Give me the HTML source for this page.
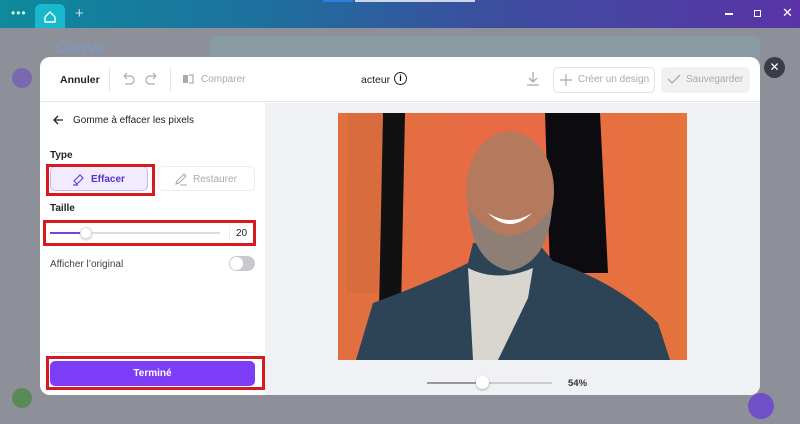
<!DOCTYPE html>
<html><head><meta charset="utf-8"><style>
*{box-sizing:border-box;margin:0;padding:0}
body{width:800px;height:424px;overflow:hidden;position:relative;font-family:"Liberation Sans",sans-serif;background:#888b95}
.top{position:absolute;left:0;top:0;width:800px;height:28px;background:linear-gradient(90deg,#0e8a9c 0%,#1f6e9e 35%,#3b4f9f 60%,#5a34a6 100%)}
.tab{position:absolute;left:35px;top:4px;width:30px;height:24px;background:#18b9cc;border-radius:6px 6px 0 0}
.bg{position:absolute;left:0;top:28px;width:800px;height:396px;background:#8e9099}
.modal{position:absolute;left:40px;top:57px;width:720px;height:338px;background:#fff;border-radius:10px;overflow:hidden}
.hdr{position:absolute;left:0;top:0;width:720px;height:45px;border-bottom:1px solid #e6e7ea;font-size:10px}
.side{position:absolute;left:0;top:46px;width:225px;height:292px;background:#fff}
.main{position:absolute;left:225px;top:46px;width:495px;height:292px;background:#f0f1f4}
.t{position:absolute;white-space:nowrap}
.red{position:absolute;border:3px solid #d71920}
</style></head><body>
<div class="top">
 <div class="t" style="left:11px;top:6px;color:#cfe;font-size:12px;letter-spacing:1px">•••</div>
 <div class="tab"><svg width="30" height="24"><path d="M10 13 L15 8 L20 13 V18 H10Z" fill="none" stroke="#fff" stroke-width="1.4"/></svg></div>
 <div class="t" style="left:75px;top:5px;color:#cde;font-size:15px">+</div>
 <div style="position:absolute;left:323px;top:0;width:30px;height:2px;background:#2c7fe0"></div>
 <div style="position:absolute;left:355px;top:0;width:120px;height:2px;background:#cfd6ea"></div>
 <div style="position:absolute;left:725px;top:13px;width:8px;height:1.5px;background:#fff"></div>
 <div style="position:absolute;left:754px;top:10px;width:7px;height:7px;border:1.5px solid #fff"></div>
 <div class="t" style="left:782px;top:5px;color:#fff;font-size:13px">✕</div>
</div>
<div class="bg">
 <div style="position:absolute;left:55px;top:10px;color:#7f97bd;font-size:17px;font-weight:bold;font-style:italic">Canva</div>
 <div style="position:absolute;left:210px;top:8px;width:550px;height:30px;background:#889aa2;border-radius:6px"></div>
 <div style="position:absolute;left:12px;top:40px;width:20px;height:20px;border-radius:50%;background:#7b68b0"></div>
 <div style="position:absolute;left:12px;top:360px;width:20px;height:20px;border-radius:50%;background:#5a8a58"></div>
 <div style="position:absolute;left:748px;top:365px;width:26px;height:26px;border-radius:50%;background:#6f50c8"></div>
</div>
<div style="position:absolute;left:764px;top:57px;width:21px;height:21px;border-radius:50%;background:#3a3d48;color:#fff;font-size:12px;text-align:center;line-height:21px">✕</div>
<div class="modal">
 <div class="hdr">
  <div class="t" style="left:20px;top:17px;color:#222;font-weight:bold;font-size:10.5px">Annuler</div>
  <div style="position:absolute;left:69px;top:10px;width:1px;height:25px;background:#e5e5e8"></div>
  <svg style="position:absolute;left:80px;top:14px" width="40" height="16"><path d="M4 5 H10 A4 4 0 0 1 10 13 H5 M4 5 L7 2 M4 5 L7 8" fill="none" stroke="#aaa" stroke-width="1.2"/><path d="M36 5 H30 A4 4 0 0 0 30 13 H35 M36 5 L33 2 M36 5 L33 8" fill="none" stroke="#aaa" stroke-width="1.2"/></svg>
  <div style="position:absolute;left:130px;top:10px;width:1px;height:25px;background:#e5e5e8"></div>
  <svg style="position:absolute;left:142px;top:16px" width="14" height="12"><rect x="1" y="2" width="5" height="8" fill="#aaa"/><path d="M7 2 H11 V10 H7" fill="none" stroke="#aaa" stroke-width="1.2"/></svg>
  <div class="t" style="left:161px;top:17px;color:#aaa">Comparer</div>
  <div class="t" style="left:321px;top:17px;color:#222;font-size:10.5px">acteur</div>
  <div style="position:absolute;left:354px;top:15px;width:13px;height:13px;border:1.5px solid #222;border-radius:50%;font-size:9px;font-weight:bold;text-align:center;line-height:10px">i</div>
  <svg style="position:absolute;left:486px;top:14px" width="14" height="16"><path d="M7 1 V11 M3 7 L7 11 L11 7 M1 14 H13" fill="none" stroke="#aaa" stroke-width="1.3"/></svg>
  <div style="position:absolute;left:513px;top:10px;width:102px;height:26px;border:1px solid #e3e3e6;border-radius:5px"></div>
  <svg style="position:absolute;left:519px;top:16px" width="14" height="14"><path d="M7 1 V13 M1 7 H13" stroke="#aaa" stroke-width="1.2"/></svg>
  <div class="t" style="left:538px;top:17px;color:#aaa">Créer un design</div>
  <div style="position:absolute;left:621px;top:10px;width:89px;height:26px;background:#f1f1f3;border-radius:5px"></div>
  <svg style="position:absolute;left:627px;top:16px" width="14" height="12"><path d="M1 6 L5 10 L13 2" fill="none" stroke="#aaa" stroke-width="1.3"/></svg>
  <div class="t" style="left:646px;top:17px;color:#aaa">Sauvegarder</div>
 </div>
 <div class="side">
  <svg style="position:absolute;left:12px;top:11px" width="12" height="12"><path d="M11 6 H2 M6 2 L2 6 L6 10" fill="none" stroke="#222" stroke-width="1.3"/></svg>
  <div class="t" style="left:33px;top:12px;font-size:10px;color:#222">Gomme à effacer les pixels</div>
  <div class="t" style="left:10px;top:47px;font-size:10px;font-weight:bold;color:#222">Type</div>
  <div style="position:absolute;left:10px;top:63px;width:98px;height:25px;background:#f1ecfd;border:1px solid #c9b6f5;border-radius:5px"></div>
  <svg style="position:absolute;left:31px;top:69px" width="14" height="14"><path d="M3 9 L9 3 L12 6 L6 12 Z M2 13 H7" fill="none" stroke="#6b3fd4" stroke-width="1.2"/></svg>
  <div class="t" style="left:51px;top:71px;font-size:10px;font-weight:bold;color:#5b2fc9">Effacer</div>
  <div style="position:absolute;left:118px;top:63px;width:97px;height:25px;border:1px solid #ececef;border-radius:5px"></div>
  <svg style="position:absolute;left:134px;top:69px" width="14" height="14"><path d="M2 12 L3 9 L10 2 L12 4 L5 11 Z M6 13 H13" fill="none" stroke="#aaa" stroke-width="1.1"/></svg>
  <div class="t" style="left:153px;top:71px;font-size:10px;color:#aaa">Restaurer</div>
  <div class="red" style="left:6px;top:61px;width:109px;height:32px"></div>
  <div class="t" style="left:10px;top:100px;font-size:10px;font-weight:bold;color:#222">Taille</div>
  <div style="position:absolute;left:10px;top:129px;width:170px;height:2px;background:#ddd"></div>
  <div style="position:absolute;left:10px;top:129px;width:37px;height:2px;background:#7b3fe4"></div>
  <div style="position:absolute;left:40px;top:124px;width:12px;height:12px;border-radius:50%;background:#fff;border:1px solid #ddd;box-shadow:0 1px 2px rgba(0,0,0,.2)"></div>
  <div style="position:absolute;left:189px;top:122px;width:1px;height:16px;background:#eee"></div>
  <div class="t" style="left:196px;top:125px;font-size:10px;color:#222">20</div>
  <div class="red" style="left:3px;top:117px;width:213px;height:26px"></div>
  <div class="t" style="left:10px;top:156px;font-size:10px;color:#444">Afficher l’original</div>
  <div style="position:absolute;left:189px;top:153px;width:26px;height:15px;border-radius:8px;background:#c8c9cc"></div>
  <div style="position:absolute;left:190px;top:154px;width:13px;height:13px;border-radius:50%;background:#fff"></div>
  <div style="position:absolute;left:10px;top:249px;width:205px;height:1px;background:#e6e6e8"></div>
  <div style="position:absolute;left:10px;top:258px;width:205px;height:25px;background:#7d3cf5;border-radius:5px;color:#fff;font-size:10px;font-weight:bold;text-align:center;line-height:25px">Terminé</div>
  <div class="red" style="left:6px;top:253px;width:219px;height:34px"></div>
 </div>
 <div class="main">
  <svg style="position:absolute;left:73px;top:10px" width="349" height="247" viewBox="0 0 349 247">
   <defs><linearGradient id="o" x1="0" x2="1"><stop offset="0" stop-color="#e0703f"/><stop offset=".5" stop-color="#ea6a45"/><stop offset="1" stop-color="#e4733c"/></linearGradient></defs>
   <rect width="349" height="247" fill="url(#o)"/>
   <path d="M45 0 H67 L62 247 H40Z" fill="#111"/>
   <path d="M207 0 H262 L270 160 H212Z" fill="#0c0c10"/>
   <path d="M10 0 H45 L40 180 H8Z" fill="#d26a3a" opacity=".6"/>
   <path d="M18 247 L35 190 Q90 170 130 150 L135 130 H200 L215 148 Q280 170 320 210 L332 247Z" fill="#2c4456"/>
   <path d="M130 155 Q160 170 195 155 L190 185 L160 247 H135Z" fill="#d8d6cf"/>
   <ellipse cx="172" cy="78" rx="44" ry="60" fill="#b57a5e"/>
   <path d="M130 95 Q172 150 214 95 Q210 150 172 158 Q134 150 130 95Z" fill="#8d7e76"/>
   <path d="M150 100 Q172 114 194 100 Q172 122 150 100Z" fill="#fff"/>
  </svg>
  <div style="position:absolute;left:162px;top:279px;width:125px;height:2px;background:#ccc"></div>
  <div style="position:absolute;left:162px;top:279px;width:55px;height:2px;background:#999"></div>
  <div style="position:absolute;left:211px;top:273px;width:13px;height:13px;border-radius:50%;background:#fff;box-shadow:0 1px 2px rgba(0,0,0,.3)"></div>
  <div class="t" style="left:303px;top:275px;font-size:9.5px;font-weight:bold;color:#333">54%</div>
 </div>
</div>
</body></html>
